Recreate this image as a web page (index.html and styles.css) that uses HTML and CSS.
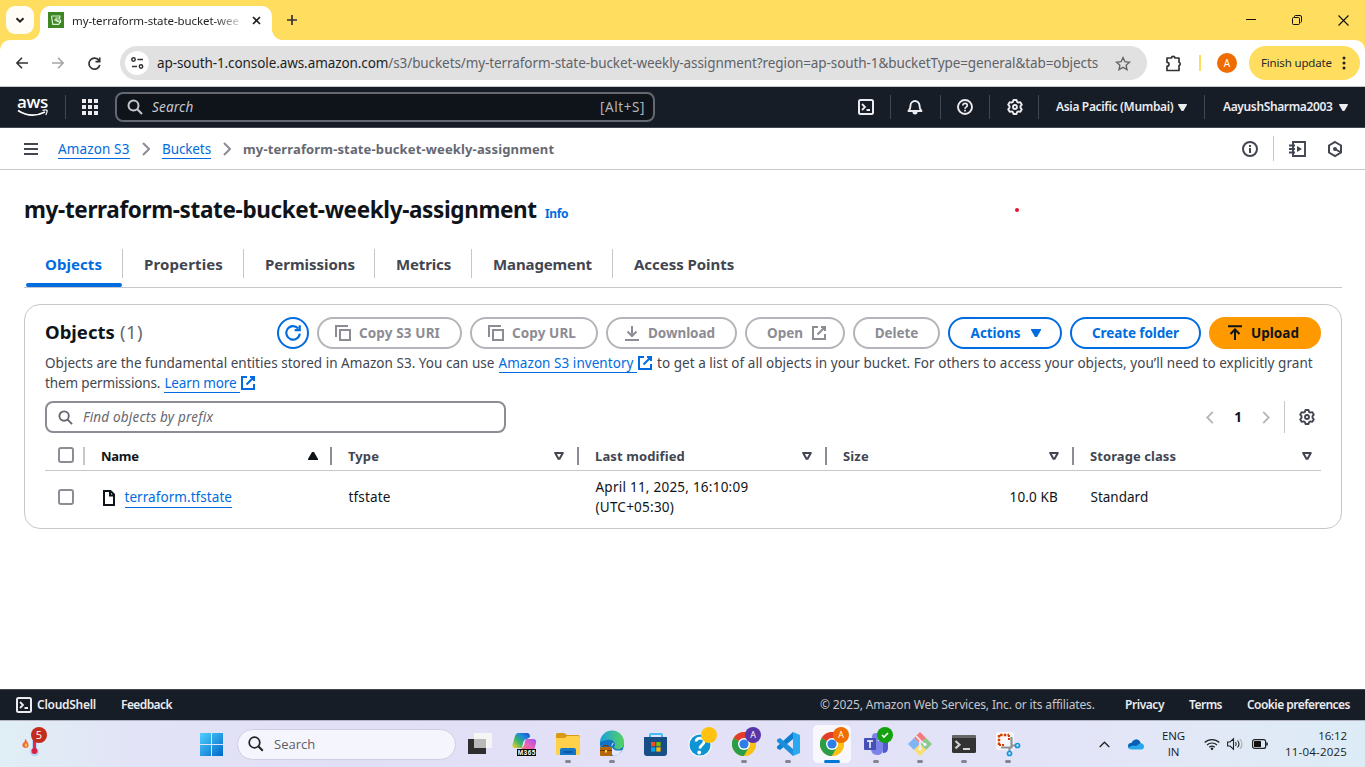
FILE: index.html
```html
<!DOCTYPE html>
<html lang="en">
<head>
<meta charset="utf-8">
<title>my-terraform-state-bucket-weekly-assignment</title>
<link rel="stylesheet" href="styles.css">
</head>
<body>
<svg class="defs" width="0" height="0">
  <symbol id="ext" viewBox="0 0 16 16"><path d="M7 2H2v12h12V9M10 2h4v4M6.500 9.500l7-7" fill="none" stroke="currentColor" stroke-width="2"/></symbol>
  <symbol id="copy" viewBox="0 0 16 16"><path d="M1 12V1h12M5 5h10v10H5z" fill="none" stroke="currentColor" stroke-width="2"/></symbol>
  <symbol id="mag" viewBox="0 0 16 16"><path d="M11.500 6.500a5 5 0 1 1-10 0 5 5 0 0 1 10 0zM10.300 10.300L15 15" fill="none" stroke="currentColor" stroke-width="2"/></symbol>
  <symbol id="gear" viewBox="0 0 16 16"><path d="M6.500 1h3l.6 1.900 1.300.7 1.900-.5 1.500 2.600-1.300 1.500v1.600l1.300 1.500-1.500 2.600-1.900-.5-1.300.7-.6 1.900h-3l-.6-1.900-1.300-.7-1.900.5-1.500-2.600 1.300-1.500V7.200L1.200 5.700l1.500-2.600 1.900.5 1.300-.7z" fill="none" stroke="currentColor" stroke-width="1.900" stroke-linejoin="round"/><circle cx="8" cy="8" r="2" fill="none" stroke="currentColor" stroke-width="1.900"/></symbol>
  <symbol id="shell" viewBox="0 0 16 16"><rect x="1" y="1" width="14" height="14" rx="1.500" fill="none" stroke="currentColor" stroke-width="2"/><path d="M4 5l3 3-3 3M8.500 11H12" fill="none" stroke="currentColor" stroke-width="1.800"/></symbol>
  <symbol id="sort" viewBox="0 0 10 8"><path d="M1.200 1h7.600L5.600 6.800H4.400z" fill="none" stroke="currentColor" stroke-width="2" stroke-linejoin="round"/></symbol>
  <symbol id="down" viewBox="0 0 10 8"><path d="M0 0h10v1L6 8H4L0 1z" fill="currentColor"/></symbol>
  <symbol id="chev" viewBox="0 0 8 14"><path d="M1 1l6 6-6 6" fill="none" stroke="currentColor" stroke-width="2"/></symbol>
  <symbol id="chrome" viewBox="0 0 24 24"><circle cx="12" cy="12" r="12" fill="#fbc116"/><path d="M12 12L1.600 6A12 12 0 0 1 22.400 6z" fill="#e33b2e"/><path d="M12 12L1.600 6A12 12 0 0 0 12 24l5-9z" fill="#2a9d4a"/><path d="M12 6h10.400A12 12 0 0 1 12 24l5.200-9z" fill="#fbc116"/><circle cx="12" cy="12" r="6" fill="#fff"/><circle cx="12" cy="12" r="4.600" fill="#2f7de9"/></symbol>
</svg>

<header class="tabstrip">
  <button class="tab-search"><svg width="10" height="7" viewBox="0 0 10 7"><path d="M1.500 1.200L5 4.700l3.500-3.500" fill="none" stroke="#222" stroke-width="2"/></svg></button>
  <div class="browser-tab">
    <svg width="16" height="16" viewBox="0 0 16 16"><path fill="#3c8624" d="M0 0h16v16H0z"/><path d="M3.500 4.200L4.800 12.400h6L12 9.500M3.500 4h8.500l-.5 3M6 8h6.500v2.200L8 8.800V6h3" fill="none" stroke="#d9efcf" stroke-width="1.200"/></svg>
    <span class="tab-title">my-terraform-state-bucket-wee</span>
    <svg width="9" height="9" viewBox="0 0 9 9"><path d="M1 1l7 7M8 1L1 8" stroke="#222" stroke-width="1.700"/></svg>
  </div>
  <svg class="new-tab" width="10" height="10" viewBox="0 0 10 10"><path d="M5 0v10M0 5h10" stroke="#333" stroke-width="1.700"/></svg>
  <div class="window-controls">
    <svg width="10" height="10" viewBox="0 0 10 10"><path d="M0 4.500h10" stroke="#111"/></svg>
    <svg width="10" height="10" viewBox="0 0 10 10"><path d="M2.500 2V1.500Q2.500.500 3.500.500H8Q9.500.500 9.500 2v4.500q0 1-1 1" fill="none" stroke="#111"/><rect x=".5" y="2.500" width="7" height="7" rx="1" fill="none" stroke="#111"/></svg>
    <svg width="11" height="11" viewBox="0 0 11 11"><path d="M.5.500l10 10M10.500.500l-10 10" stroke="#111" stroke-width="1.100"/></svg>
  </div>
</header>

<div class="toolbar-back"><div class="toolbar">
  <svg class="nav-ico" width="12" height="12" viewBox="0 0 12 12"><path d="M12 6H1M6 .8L.9 6 6 11.200" fill="none" stroke="#333" stroke-width="1.600"/></svg>
  <svg class="nav-ico" width="12" height="12" viewBox="0 0 12 12"><path d="M0 6h11M6 .8L11.100 6 6 11.200" fill="none" stroke="#a5a5a5" stroke-width="1.600"/></svg>
  <svg class="nav-ico" width="13" height="13" viewBox="0 0 13 13"><path d="M11 3.500A5.500 5.500 0 1 0 11.800 8M11.700.500v4.200H7.500" fill="none" stroke="#333" stroke-width="1.700"/></svg>
  <div class="omnibox">
    <span class="site"><svg width="13" height="12" viewBox="0 0 13 12"><g fill="none" stroke="#333" stroke-width="1.500"><circle cx="2.500" cy="2.500" r="1.700"/><path d="M6.500 2.500H12M1 9.500h5"/><circle cx="10" cy="9.500" r="1.700"/></g></svg></span>
    <span class="url"><b>ap-south-1.console.aws.amazon.com</b>/s3/buckets/my-terraform-state-bucket-weekly-assignment?region=ap-south-1&amp;bucketType=general&amp;tab=objects</span>
    <svg class="star" width="16" height="15" viewBox="0 0 16 15"><path d="M8 1.600l1.900 4.100 4.500.5-3.300 3 .9 4.400L8 11.400l-4 2.200.9-4.400-3.300-3 4.500-.5z" fill="none" stroke="#666" stroke-width="1.400"/></svg>
  </div>
  <svg class="puzzle" width="17" height="17" viewBox="0 0 17 17"><path d="M2 3h4.500a1.700 1.700 0 0 1 3.400 0H14v4.200a1.800 1.800 0 0 1 0 3.400V15.500H2v-4.200a2 2 0 0 0 0-4z" fill="none" stroke="#333" stroke-width="1.700" stroke-linejoin="round"/></svg>
  <i class="sep-y"></i>
  <span class="avatar">A</span>
  <button class="finish"><span>Finish update</span><svg width="4" height="14" viewBox="0 0 4 14"><g fill="#222"><circle cx="2" cy="2" r="1.500"/><circle cx="2" cy="7" r="1.500"/><circle cx="2" cy="12" r="1.500"/></g></svg></button>
</div></div>

<nav class="aws-nav">
  <div class="aws-logo"><span>aws</span><svg width="32" height="8" viewBox="0 0 32 8"><path d="M1 1.500Q14 10 28 3" fill="none" stroke="#fff" stroke-width="1.700"/><path d="M25.500 1.300q3.500-.8 4.500 0 .6 2-1.200 4.700" fill="none" stroke="#fff" stroke-width="1.300"/></svg></div>
  <i class="vline"></i>
  <svg class="apps" width="16" height="16" viewBox="0 0 16 16"><path d="M0 0h4v4H0zM6 0h4v4H6zM12 0h4v4h-4zM0 6h4v4H0zM6 6h4v4H6zM12 6h4v4h-4zM0 12h4v4H0zM6 12h4v4H6zM12 12h4v4h-4z" fill="#ebebf0"/></svg>
  <div class="aws-search"><svg width="16" height="16"><use href="#mag"/></svg><em>Search</em><span class="shortcut">[Alt+S]</span></div>
  <div class="nav-cell c1"><svg width="16" height="16"><use href="#shell"/></svg></div>
  <div class="nav-cell c2"><svg width="16" height="16" viewBox="0 0 16 16"><path d="M1.500 12h13c-2-1.800-2-3.500-2-5.500a4.500 4.500 0 0 0-9 0c0 2 0 3.700-2 5.500z" fill="none" stroke="currentColor" stroke-width="1.900" stroke-linejoin="round"/><path d="M5.500 13h5a2.500 2.500 0 0 1-5 0z" fill="currentColor"/></svg></div>
  <div class="nav-cell c3"><svg width="16" height="16" viewBox="0 0 16 16"><circle cx="8" cy="8" r="7" fill="none" stroke="currentColor" stroke-width="1.900"/><path d="M5.800 6.500c0-2.800 4.500-2.700 4.500 0 0 1.600-2.300 1.600-2.300 3.200M8 10.700v1.700" fill="none" stroke="currentColor" stroke-width="1.700"/></svg></div>
  <div class="nav-cell c4"><svg width="16" height="16"><use href="#gear"/></svg></div>
  <div class="nav-cell c5"><span class="region">Asia Pacific (Mumbai)</span><svg width="9" height="7"><use href="#down"/></svg></div>
  <div class="nav-cell c6"><span class="user">AayushSharma2003</span><svg width="9" height="7"><use href="#down"/></svg></div>
</nav>

<div class="crumbs">
  <svg width="14" height="12" viewBox="0 0 14 12"><path d="M0 1h14M0 6h14M0 11h14" stroke="#424650" stroke-width="2"/></svg>
  <a class="crumb k1"><span>Amazon S3</span></a>
  <svg class="sep" width="8" height="14"><use href="#chev"/></svg>
  <a class="crumb k2"><span>Buckets</span></a>
  <svg class="sep" width="8" height="14"><use href="#chev"/></svg>
  <b class="current">my-terraform-state-bucket-weekly-assignment</b>
  <div class="tools">
    <svg width="16" height="16" viewBox="0 0 16 16"><circle cx="8" cy="8" r="7" fill="none" stroke="#424650" stroke-width="2"/><path d="M8 4v2M8 7v5" stroke="#424650" stroke-width="2"/></svg>
    <i></i>
    <svg width="17" height="16" viewBox="0 0 17 16"><path d="M4 3.500V1h12v14H4v-2.500M0 4.500h6M0 8h6M0 11.500h6M4 3v10" fill="none" stroke="#424650" stroke-width="1.900"/><path d="M8 5l5 3-5 3z" fill="#424650"/></svg>
    <svg width="16" height="16" viewBox="0 0 16 16"><path d="M8 1l6 3.500v7L8 15l-6-3.500v-7z" fill="none" stroke="#424650" stroke-width="2"/><circle cx="8" cy="8" r="2" fill="#424650"/><path d="M8 8l6 3.500" stroke="#424650" stroke-width="2"/></svg>
  </div>
</div>

<main>
  <div class="title"><h1>my-terraform-state-bucket-weekly-assignment</h1><a class="info">Info</a><i class="dot"></i></div>
  <div class="tabs">
    <div class="w1 on"><span>Objects</span></div>
    <div class="w2"><span>Properties</span></div>
    <div class="w3"><span>Permissions</span></div>
    <div class="w4"><span>Metrics</span></div>
    <div class="w5"><span>Management</span></div>
    <div class="w6"><span>Access Points</span></div>
  </div>
  <section class="card">
    <div class="card-head">
      <h2><span class="label">Objects</span><span class="count">(1)</span></h2>
      <button class="btn blue round"><svg width="18" height="18" viewBox="0 0 16 16"><path d="M14 8.500A6 6 0 1 1 12.600 4M14 1v4.500H9.500" fill="none" stroke="currentColor" stroke-width="1.900"/></svg></button>
      <button class="btn u1"><svg width="16" height="16"><use href="#copy"/></svg><span>Copy S3 URI</span></button>
      <button class="btn u2"><svg width="16" height="16"><use href="#copy"/></svg><span>Copy URL</span></button>
      <button class="btn u3"><svg width="16" height="16" viewBox="0 0 16 16"><path d="M8 1v10M3.500 6.500L8 11l4.500-4.500M1 15h14" fill="none" stroke="currentColor" stroke-width="2"/></svg><span>Download</span></button>
      <button class="btn u4"><span>Open</span><svg width="16" height="16"><use href="#ext"/></svg></button>
      <button class="btn u5"><span>Delete</span></button>
      <button class="btn blue u6"><span>Actions</span><svg width="10" height="8"><use href="#down"/></svg></button>
      <button class="btn blue u7"><span>Create folder</span></button>
      <button class="btn orange u8"><svg width="16" height="16" viewBox="0 0 16 16"><path d="M1 1.200h14M8 15V5M3.500 9L8 4.500 12.500 9" fill="none" stroke="currentColor" stroke-width="2"/></svg><span>Upload</span></button>
    </div>
    <div class="desc">
      <div><span class="d1">Objects are the fundamental entities stored in Amazon S3. You can use</span> <a><span class="d2">Amazon S3 inventory</span>&nbsp;</a><svg width="16" height="16"><use href="#ext"/></svg> <span class="d3">to get a list of all objects in your bucket. For others to access your objects, you’ll need to explicitly grant</span></div>
      <div><span class="d4">them permissions.</span> <a><span class="d5">Learn more</span>&nbsp;</a><svg width="16" height="16"><use href="#ext"/></svg></div>
    </div>
    <div class="filter-row">
      <div class="filter"><svg width="15" height="15"><use href="#mag"/></svg><em>Find objects by prefix</em></div>
      <div class="pager"><svg class="flip" width="8" height="13"><use href="#chev"/></svg><b>1</b><svg width="8" height="13"><use href="#chev"/></svg><i></i><svg class="gear" width="16" height="16"><use href="#gear"/></svg></div>
    </div>
    <div class="grid head">
      <div class="check"><i></i></div>
      <div class="sorted"><b class="n1">Name</b><svg class="flipv" width="10" height="8"><use href="#down"/></svg></div>
      <div><b class="n2">Type</b><svg width="10" height="8"><use href="#sort"/></svg></div>
      <div><b class="n3">Last modified</b><svg width="10" height="8"><use href="#sort"/></svg></div>
      <div><b class="n4">Size</b><svg width="10" height="8"><use href="#sort"/></svg></div>
      <div><b class="n5">Storage class</b><svg width="10" height="8"><use href="#sort"/></svg></div>
    </div>
    <div class="grid row">
      <div class="check"><i></i></div>
      <div class="name"><svg width="14" height="16" viewBox="0 0 14 16"><path d="M2 1h6.500L12 4.500V15H2zM8 1v4.500h4" fill="none" stroke="#0f141a" stroke-width="2"/></svg><a>terraform.tfstate</a></div>
      <div><span class="type">tfstate</span></div>
      <div class="stack"><span>April 11, 2025, 16:10:09</span><span>(UTC+05:30)</span></div>
      <div class="right"><span class="size">10.0 KB</span></div>
      <div><span>Standard</span></div>
    </div>
  </section>
</main>

<footer>
  <svg width="16" height="16"><use href="#shell"/></svg>
  <span class="f1">CloudShell</span>
  <span class="f2">Feedback</span>
  <span class="f3">© 2025, Amazon Web Services, Inc. or its affiliates.</span>
  <span class="f4">Privacy</span>
  <span class="f5">Terms</span>
  <span class="f6">Cookie preferences</span>
</footer>

<div class="taskbar">
  <div class="weather"><svg width="30" height="32" viewBox="0 0 30 32"><path d="M3.500 20c-5-1-3-5-1-6 0-2 1-3 1.500-3 0 2 3 4 2.500 6.500C6.500 19 5.500 20 3.500 20z" fill="#f06a3a"/><path d="M4 19q-2.500-1.500 0-4 2.500 2.500 0 4z" fill="#ffc64a"/><path d="M10 8h5v12a4.500 4.500 0 1 1-5 0z" fill="#b8d4f5"/><path d="M11 10h3v12h-3z" fill="#e8274b"/><circle cx="12.500" cy="23" r="3" fill="#d81f45"/></svg><span>5</span></div>
  <svg class="win" width="23" height="23" viewBox="0 0 23 23"><defs><linearGradient id="wg" x1="0" y1="0" x2="1" y2="1"><stop offset="0" stop-color="#4fd0ff"/><stop offset="1" stop-color="#0068c8"/></linearGradient></defs><path d="M0 0h11v11H0zM12 0h11v11H12zM0 12h11v11H0zM12 12h11v11H12z" fill="url(#wg)"/></svg>
  <div class="task-search"><svg width="16" height="16" viewBox="0 0 16 16"><circle cx="6.500" cy="6.500" r="5.300" fill="none" stroke="#222" stroke-width="1.700"/><path d="M10.500 10.500l4.300 4.300" stroke="#222" stroke-width="2"/></svg><span>Search</span></div>
  <div class="apps-row">
    <div><svg width="24" height="24" viewBox="0 0 24 24"><path d="M0 7h18v15H0z" fill="#2e2e2e"/><path d="M6 1h18v15H6z" fill="#f5f5f3"/><path d="M6 7h12v9H6z" fill="#b9b9b9"/></svg></div>
    <div><svg width="24" height="24" viewBox="0 0 24 24"><defs><linearGradient id="cp1" x1="0" y1="1" x2="1" y2="0"><stop offset="0" stop-color="#ffd02f"/><stop offset=".4" stop-color="#35b36b"/><stop offset=".7" stop-color="#1a86e0"/><stop offset="1" stop-color="#2448c8"/></linearGradient><linearGradient id="cp2" x1="0" y1="1" x2="1" y2="0"><stop offset="0" stop-color="#ff7a4a"/><stop offset=".5" stop-color="#e85fc0"/><stop offset="1" stop-color="#9a54e8"/></linearGradient></defs><path d="M6 1h9q3 0 3 4l-3 2q-3 0-4 4l-1 5H3q-4 0-2-5l2-7q1-3 3-3z" fill="url(#cp1)"/><path d="M15 7h6q4 0 3 4l-2 8H11q-3 0-1-3 2-1 2.500-4 .5-5 2.500-5z" fill="url(#cp2)"/><path d="M5 17h19v7H5z" fill="#000"/><text class="m365" x="5.800" y="23" textLength="17.500">M365</text></svg></div>
    <div class="run"><svg width="24" height="24" viewBox="0 0 24 24"><path d="M0 2.500Q0 1 1.500 1H8l3 2h11q2 0 2 2v3H0z" fill="#d99a13"/><path d="M0 6h9l2-2h11.500Q24 4 24 5.500V21.500q0 1.500-1.500 1.500H1.500Q0 23 0 21.500z" fill="#ffd04a"/><path d="M4 23v-5q0-2 2-2h12q2 0 2 2v5z" fill="#1477c9"/><path d="M7.500 20h9" stroke="#0b4f94" stroke-width="1.500"/></svg></div>
    <div class="run"><svg width="24" height="24" viewBox="0 0 24 24"><defs><linearGradient id="eg" x1="0" y1="0" x2="1" y2="0"><stop offset="0" stop-color="#1a9fe0"/><stop offset="1" stop-color="#55d35f"/></linearGradient></defs><circle cx="12" cy="12" r="12" fill="#1272c4"/><path d="M0 10A12 12 0 0 1 24 11c0 5-4 7-8 6-3-1-2-2-1-4 0-4-4-6-8-5-4 .500-6 2-7 2z" fill="url(#eg)"/><path d="M14 10.500q-3.500 1-2 5 2.500 4.500 10 2.500-2.500 5.500-8.500 6-5-5-1.500-10z" fill="#e6e8fa"/><rect y="15" width="12" height="9" rx="1" fill="#b5650c"/><path d="M0 18.500h12" stroke="#6d3502"/><path d="M4 15v-1.500h4V15" fill="none" stroke="#7a3c02"/><rect x="5" y="18" width="2" height="2.500" fill="#ffd44d"/></svg></div>
    <div><svg width="24" height="24" viewBox="0 0 24 24"><path d="M6 6V3q0-1 1-1h10q1 0 1 1v3" fill="none" stroke="#42bff0" stroke-width="2"/><path d="M0 5h23v16q0 3-3 3H3q-3 0-3-3z" fill="#174e85"/><path fill="#f25022" d="M7 10h4.300v4.300H7z"/><path fill="#7fba00" d="M12.300 10h4.300v4.300h-4.300z"/><path fill="#00a4ef" d="M7 15.300h4.300v4.300H7z"/><path fill="#ffb900" d="M12.300 15.300h4.300v4.300h-4.300z"/></svg></div>
    <div><svg width="24" height="24" viewBox="0 0 24 24"><circle cx="12" cy="13" r="11.500" fill="#fff"/><circle cx="12" cy="13" r="10.500" fill="#0c94d4"/><path d="M8 9.500c.3-4.500 8.500-4.500 8.200 0-.2 3-3.800 3.500-4.400 7" fill="none" stroke="#fff" stroke-width="2.800"/><circle cx="11.200" cy="20.500" r="1.900" fill="#fff"/></svg><span class="badge gold"></span></div>
    <div class="run"><svg width="24" height="24"><use href="#chrome"/></svg><span class="badge purple">A</span></div>
    <div class="run"><svg width="24" height="24" viewBox="0 0 24 24"><path d="M17 0l7 3v18l-7 3z" fill="#29a9f2"/><path d="M17 0v7L4 18l-3-1.500v-2z" fill="#0c7fd0"/><path d="M17 24v-7L4 6 1 7.500v2z" fill="#1b8fdc"/></svg></div>
    <div class="run active"><svg width="24" height="24"><use href="#chrome"/></svg><span class="badge amber">A</span></div>
    <div class="run"><svg width="24" height="24" viewBox="0 0 24 24"><circle cx="12" cy="5" r="4" fill="#7b83eb"/><circle cx="20" cy="7" r="3" fill="#5059c9"/><path d="M17 10h7v6q0 5-5 5z" fill="#5059c9"/><path d="M7 9h12v8q0 6-6 6-6-.5-6-6z" fill="#7b83eb"/><rect y="6" width="12" height="12" rx="1" fill="#4550b5"/><path d="M3 9h6M6 9v7" stroke="#fff" stroke-width="1.500"/></svg><span class="badge green"><svg width="8" height="6" viewBox="0 0 8 6"><path d="M1 3l2 2 4-4" fill="none" stroke="#fff" stroke-width="1.600"/></svg></span></div>
    <div class="run"><svg width="24" height="24" viewBox="0 0 24 24"><path d="M12 0l6 6-6 6-6-6z" fill="#f47b7b"/><path d="M6 6l6 6-6 6-6-6z" fill="#7fb5f5"/><path d="M18 6l6 6-6 6-6-6z" fill="#86c98a"/><path d="M12 12l6 6-6 6-6-6z" fill="#fbdd6b"/><path d="M8 4l4 4v9M12 8l5 5" fill="none" stroke="#f3efff" stroke-width="1.600"/><circle cx="12" cy="17" r="1.700" fill="#f3efff"/><circle cx="17" cy="12.500" r="1.700" fill="#f3efff"/></svg></div>
    <div class="run"><svg width="24" height="24" viewBox="0 0 24 24"><rect y="3" width="24" height="18" rx="1.500" fill="#333"/><path d="M0 6V4.500Q0 3 1.500 3h21Q24 3 24 4.500V6z" fill="#666"/><path d="M3.500 9l4 3.700-4 3.700" fill="none" stroke="#ccc" stroke-width="2.200"/><path d="M11 17h7" stroke="#fff" stroke-width="1.600"/></svg></div>
    <div class="run"><svg width="24" height="24" viewBox="0 0 24 24"><rect width="18" height="18" rx="2" fill="#f8f8f8"/><path d="M3 13V3h10" fill="none" stroke="#d83b01" stroke-width="2.400" stroke-dasharray="2.500 1.200"/><path d="M3 13h5M13 3v5" stroke="#d83b01" stroke-width="2" stroke-dasharray="2 1"/><path d="M15.500 5v10.500H5M15.500 13.500H20M13.500 15v5" fill="none" stroke="#8e9297" stroke-width="2.200"/><circle cx="21.500" cy="13.500" r="2" fill="none" stroke="#1597dc" stroke-width="1.700"/><circle cx="13.500" cy="21.500" r="2" fill="none" stroke="#1597dc" stroke-width="1.700"/></svg></div>
  </div>
  <div class="tray">
    <svg class="y1" width="11" height="7" viewBox="0 0 11 7"><path d="M.7 6l4.800-4.800L10.300 6" fill="none" stroke="#222" stroke-width="1.300"/></svg>
    <svg class="y2" width="16" height="11" viewBox="0 0 16 11"><path d="M4 10.500Q0 10.500 0 7.200 0 4 3.500 4 5 .500 8.500.500 11.500.500 12.500 4 16 4.500 16 7.500T13 10.500z" fill="#28a8ea"/><path d="M.3 8.500Q-.5 4 3.500 4 5 .500 8.500.500 11.500.500 12.500 4L8 7q-3-1.500-7.700 1.500z" fill="#0a5fb5"/></svg>
    <div class="lang"><span>ENG</span><span>IN</span></div>
    <svg class="y3" width="16" height="12" viewBox="0 0 16 12"><g fill="none" stroke="#222" stroke-width="1.200"><path d="M.7 4.500a10.500 10.500 0 0 1 14.600 0M3 7a7.200 7.200 0 0 1 10 0M5.300 9.300a4 4 0 0 1 5.400 0"/></g><circle cx="8" cy="10.700" r="1.300" fill="#222"/></svg>
    <svg class="y4" width="16" height="12" viewBox="0 0 16 12"><g fill="none" stroke="#222" stroke-width="1.100"><path d="M.6 4H3L6.500.800v10.400L3 8H.600zM8.500 4q1.500 2 0 4"/><path d="M10.500 2.500q3 3.500 0 7"/><path d="M12.800 1q4.500 5 0 10" stroke="#aaa"/></g></svg>
    <svg class="y5" width="16" height="10" viewBox="0 0 16 10"><rect x=".6" y=".6" width="13" height="8.800" rx="2" fill="none" stroke="#222" stroke-width="1.200"/><rect x="2" y="2" width="7" height="6" rx=".5" fill="#111"/><path d="M15 3.500v3" stroke="#222" stroke-width="1.600"/></svg>
    <div class="clock"><span>16:12</span><span class="date">11-04-2025</span></div>
  </div>
</div>
</body>
</html>
```
FILE: styles.css
```css
* { box-sizing: border-box; }
body { margin: 0; width: 1365px; height: 767px; overflow: hidden; display: flex; flex-direction: column; background: #fff; font: 13.5px/20px "Noto Sans", sans-serif; color: #0f141a; }
svg { display: block; flex: none; overflow: visible; }
.defs { position: absolute; }
button { font: inherit; padding: 0; border: 0; background: none; color: inherit; }
span, b, em, a, h1 { white-space: nowrap; }

/* Browser tab strip */
.tabstrip { height: 40px; flex: none; display: flex; background: #ffdd5e; }
.tab-search { width: 28px; height: 28px; margin: 6px 0 0 6px; border-radius: 9px; background: #fffdf5; display: grid; place-items: center; }
.browser-tab { position: relative; width: 232px; height: 34px; margin: 6px 0 0 6px; padding: 0 11px 6px 8px; border-radius: 10px 10px 0 0; background: #fff; display: flex; align-items: center; }
.browser-tab::before, .browser-tab::after { content: ""; position: absolute; bottom: 0; width: 10px; height: 10px; }
.browser-tab::before { left: -10px; background: radial-gradient(circle at 0 0, transparent 9.5px, #fff 10px); }
.browser-tab::after { right: -10px; background: radial-gradient(circle at 100% 0, transparent 9.5px, #fff 10px); }
.tab-title { width: 168px; margin: 2px 12px 0 8px; overflow: hidden; font-size: 11.5px; letter-spacing: -.09px; color: #1f1f1f; mask-image: linear-gradient(90deg, #000 85%, rgba(0,0,0,.15)); }
.new-tab { margin: 15px 0 0 15px; }
.window-controls { display: flex; gap: 36px; margin: 15px 16px 0 auto; }

/* Browser toolbar */
.toolbar-back { background: #ffdd5e; flex: none; }
.toolbar { height: 47px; display: flex; align-items: center; background: #fff; border-radius: 10px 10px 0 0; border-bottom: 1px solid #c8c8c8; padding: 0 5px 0 16px; }
.nav-ico { margin-right: 24px; }
.omnibox { width: 1027px; height: 34px; margin-left: -5px; padding: 0 16px 0 5px; border-radius: 17px; background: #e1e1e1; display: flex; align-items: center; }
.site { width: 24px; height: 24px; border-radius: 50%; background: #fff; display: grid; place-items: center; }
.url { margin-left: 8px; letter-spacing: -.09px; color: #5f6368; }
.url b { font-weight: 400; color: #1f1f1f; }
.star { margin-left: auto; }
.puzzle { margin-left: 18px; }
.sep-y { width: 2px; height: 16px; margin: 0 16px 0 17px; background: #ffdd5e; }
.avatar { width: 20px; height: 20px; border-radius: 50%; background: #ef6c00; color: #fff; font-size: 10px; text-align: center; }
.finish { width: 111px; height: 34px; margin-left: auto; padding: 0 14px 0 12px; border-radius: 17px; background: #ffdd5e; display: flex; align-items: center; justify-content: space-between; font-size: 11.5px; letter-spacing: -.16px; color: #2b2b2b; }

/* AWS navigation */
.aws-nav { height: 41px; flex: none; display: flex; align-items: center; background: #161d26; border-bottom: 1px solid #424650; color: #ebebf0; padding-left: 17px; }
.aws-logo { width: 32px; font: 600 17px/14px "Open Sans", sans-serif; color: #fff; padding-bottom: 2px; }
.aws-logo span { display: block; height: 14px; letter-spacing: -.3px; }
.vline { width: 1px; height: 24px; margin: 0 16px; background: #424650; }
.aws-search { width: 540px; height: 30px; margin-left: 17px; border: 2px solid #656871; border-radius: 8px; background: #0f141a; display: flex; align-items: center; padding: 0 8px 0 10px; color: #c6c6cd; }
.aws-search em { margin-left: 9px; letter-spacing: .2px; }
.shortcut { margin-left: auto; letter-spacing: .57px; color: #b4b4bb; }
.nav-cell { height: 24px; display: flex; align-items: center; border-right: 1px solid #424650; font-size: 12px; font-weight: 600; }
.c1 { width: 33px; margin-left: 203px; }
.c2 { width: 50px; padding-left: 16px; }
.c3 { width: 49px; padding-left: 16px; }
.c4 { width: 49px; padding-left: 17px; }
.c5 { width: 166px; padding-left: 17px; }
.c6 { border: 0; padding-left: 18px; }
.region { width: 122px; letter-spacing: -.33px; }
.user { width: 116px; letter-spacing: -.37px; }

/* Breadcrumbs */
.crumbs { height: 42px; flex: none; display: flex; align-items: center; padding: 0 22px 0 24px; border-bottom: 1px solid #c6c6cd; }
.crumb { color: #006ce0; }
.crumb span, .desc a, .row a { border-bottom: 1px solid #006ce0; }
.crumb span { display: inline-block; line-height: 18px; }
.k1 { width: 72px; margin-left: 20px; letter-spacing: .13px; }
.k2 { width: 49px; letter-spacing: -.11px; }
.sep { margin: 0 12px; color: #8c8c94; }
.current { color: #656871; font-size: 13px; letter-spacing: .14px; }
.tools { margin-left: auto; display: flex; align-items: center; gap: 15px; }
.tools i { width: 1px; height: 25px; background: #c6c6cd; }
.tools svg:nth-child(4) { margin-left: 6px; }

/* Page title and tabs */
main { flex: 1; padding: 26px 23px 0 24px; }
.title { display: flex; align-items: baseline; height: 34px; }
h1 { margin: 0; width: 521px; font-size: 22.5px; line-height: 28px; font-weight: 700; letter-spacing: -.36px; }
.info { color: #006ce0; font-size: 12px; font-weight: 700; letter-spacing: -.41px; width: 470px; }
.dot { width: 4px; height: 4px; border-radius: 50%; background: #e8112d; position: relative; top: -6px; }
.tabs { height: 58px; border-bottom: 1px solid #c6c6cd; display: flex; align-items: center; color: #424650; font-size: 15px; font-weight: 700; }
.tabs > div { height: 29px; line-height: 31px; border-right: 1px solid #c6c6cd; margin-top: 10px; padding-left: 21px; }
.w1 { width: 99px; letter-spacing: .06px; } .w2 { width: 121px; letter-spacing: .13px; } .w3 { width: 131px; letter-spacing: -.03px; } .w4 { width: 97px; letter-spacing: -.15px; } .w5 { width: 141px; letter-spacing: -.12px; }
.tabs .w6 { border: 0; letter-spacing: -.04px; }
.tabs .on { color: #006ce0; position: relative; }
.on::after { content: ""; position: absolute; left: 2px; right: 0; top: 34px; height: 4px; border-radius: 2px; background: #006ce0; }

/* Objects card */
.card { height: 225px; margin-top: 16px; border: 1px solid #c6c6cd; border-radius: 16px; padding: 12px 20px 0; }
.card-head { height: 32px; display: flex; gap: 8px; align-items: center; }
h2 { width: 224px; margin: 0; font-size: 18.5px; line-height: 28px; display: flex; padding-bottom: 2px; }
.label { width: 75px; letter-spacing: 0; }
.count { font-weight: 400; color: #656871; letter-spacing: .4px; }
.btn { height: 32px; border: 2px solid #b4b4bb; border-radius: 16px; color: #8c8c94; font-weight: 700; display: flex; align-items: center; justify-content: center; gap: 8px; flex: none; }
.blue { border-color: #006ce0; color: #006ce0; }
.orange { border-color: #ff9900; background: #ff9900; color: #0f141a; }
.round { width: 32px; }
.u1, .u2, .u3, .u8 { padding-right: 4px; }
.u1 { width: 145px; letter-spacing: .13px; }
.u2 { width: 128px; letter-spacing: .1px; }
.u3 { width: 131px; letter-spacing: -.06px; }
.u4 { width: 100px; padding-left: 4px; }
.u5 { width: 87px; letter-spacing: -.1px; }
.u6 { width: 114px; gap: 11px; padding-left: 2px; letter-spacing: -.06px; }
.u7 { width: 131px; letter-spacing: -.1px; }
.u8 { width: 112px; letter-spacing: .03px; }
.desc { margin-top: 4px; color: #424650; white-space: nowrap; height: 48px; }
.desc div { display: flex; height: 20px; }
.desc a { color: #006ce0; height: 20px; margin-left: 4px; }
.desc svg { color: #006ce0; margin: 2px 4px 0 0; }
.d1 { letter-spacing: .03px; } .d2 { letter-spacing: .05px; } .d3 { letter-spacing: .045px; } .d4 { letter-spacing: -.13px; } .d5 { letter-spacing: -.14px; }
.filter-row { display: flex; height: 32px; }
.filter { width: 461px; border: 2px solid #8c8c94; border-radius: 8px; display: flex; align-items: center; padding-left: 11px; gap: 10px; color: #656871; letter-spacing: .19px; }
.pager { margin-left: auto; margin-right: 6px; display: flex; align-items: center; color: #b4b4bb; }
.pager b { width: 48px; text-align: center; color: #0f141a; }
.pager i { width: 1px; height: 32px; margin: 0 14px; background: #c6c6cd; }
.pager .gear { color: #424650; }

/* Objects table */
.grid { display: grid; grid-template-columns: 40px 247px 247px 248px 247px 247px; width: 1276px; }
.head { height: 38px; border-bottom: 1px solid #c6c6cd; font-size: 13px; }
.head > div { display: flex; align-items: center; justify-content: space-between; position: relative; color: #424650; padding: 8px 15px 0 16px; }
.head > div:last-child { padding-right: 9px; }
.head > div:not(:last-child)::after { content: ""; position: absolute; right: 0; top: 14px; width: 2px; height: 18px; background: #8c8c94; }
.head > .check::after { background: #c6c6cd !important; }
.check i { width: 16px; height: 16px; flex: none; border: 2px solid #8c8c94; border-radius: 3px; display: block; }
.head > .check { padding: 7px 0 0 13px; }
.head > .sorted { color: #0f141a; padding-right: 14px; }
.n1 { letter-spacing: -.25px; } .n2 { letter-spacing: .1px; } .n3 { letter-spacing: .12px; } .n4 { letter-spacing: .16px; } .n5 { letter-spacing: .08px; }
.flip { transform: scaleX(-1); }
.flipv { transform: scaleY(-1); }
.row { height: 52px; }
.row > div { display: flex; align-items: center; padding: 0 16px 0 16.5px; }
.row > .check { padding: 0 0 0 13px; }
.row > .name { padding-top: 1px; }
.row a { color: #006ce0; margin-left: 9px; line-height: 19px; letter-spacing: .06px; }
.type { letter-spacing: .15px; }
.row > .stack { flex-direction: column; justify-content: center; align-items: flex-start; letter-spacing: .24px; }
.row > .right { justify-content: flex-end; }
.size { letter-spacing: .15px; }

/* AWS footer */
footer { height: 32px; flex: none; display: flex; align-items: center; padding: 0 0 1px 16px; background: #161d26; border-top: 1px solid #424650; border-bottom: 1px solid #b3b5c4; color: #ebebf0; font-size: 12px; font-weight: 600; }
.f1 { width: 84px; margin-left: 5px; letter-spacing: -.27px; }
.f2 { width: 699px; letter-spacing: -.58px; }
.f3 { width: 305px; font-weight: 400; color: #c6c6cd; letter-spacing: -.15px; }
.f4 { width: 64px; letter-spacing: -.45px; }
.f5 { width: 58px; letter-spacing: -.53px; }
.f6 { letter-spacing: -.54px; }

/* Desktop taskbar */
.taskbar { height: 46px; flex: none; display: flex; align-items: center; font-family: "Open Sans", sans-serif; background: linear-gradient(90deg, #e0eff5, #e2e3f6 10%, #e1dff6 25%, #e3e3f8 75%, #e2e8f6 88%, #dcecf6); }
.weather { position: relative; width: 178px; margin-left: 22px; }
.weather span { position: absolute; left: 9px; top: -1px; width: 16px; height: 16px; border-radius: 50%; background: #c42b1c; color: #fff; font-size: 11px; line-height: 16px; text-align: center; }
.task-search { width: 219px; height: 31px; margin: 0 2px 0 14px; padding-left: 10px; border: 1px solid #cfcfe4; border-radius: 16px; background: #f5f5fd; display: flex; align-items: center; gap: 10px; font-size: 13px; color: #5d5d66; }
.apps-row { display: flex; width: 572px; }
.apps-row > div { position: relative; width: 44px; height: 46px; display: grid; place-items: center; }
.apps-row > div > svg { position: relative; z-index: 1; }
.m365 { font: 700 6.5px "Liberation Sans", sans-serif; fill: #fff; }
.run::after { content: ""; position: absolute; left: 19px; bottom: 4px; width: 6px; height: 3px; border-radius: 2px; background: #858591; }
.active::before { content: ""; position: absolute; inset: 4px 3px; border-radius: 5px; background: #f7f7fd; }
.active::after { left: 14px; width: 16px; background: #0078d4; z-index: 2; }
.badge { position: absolute; z-index: 3; left: 23px; top: 6px; width: 16px; height: 16px; border-radius: 50%; color: #fff; font-size: 9px; line-height: 16px; display: grid; place-items: center; }
.gold { background: #ffc20e; } .purple { background: #5a35a8; } .amber { background: #ef6c00; } .green { background: #13a10e; }
.tray { flex: 1; display: flex; align-items: center; font-size: 11.5px; line-height: 16px; color: #1a1a1a; padding-left: 69px; }
.y1 { margin-right: 18px; } .y2 { margin-right: 17px; } .y3 { margin-left: 18px; } .y4 { margin-left: 7px; } .y5 { margin-left: 9px; }
.lang, .clock { display: flex; flex-direction: column; align-items: center; width: 25px; letter-spacing: -.1px; }
.clock { margin-left: auto; margin-right: 18px; width: 62px; align-items: flex-end; }
.date { letter-spacing: .2px; }
```
